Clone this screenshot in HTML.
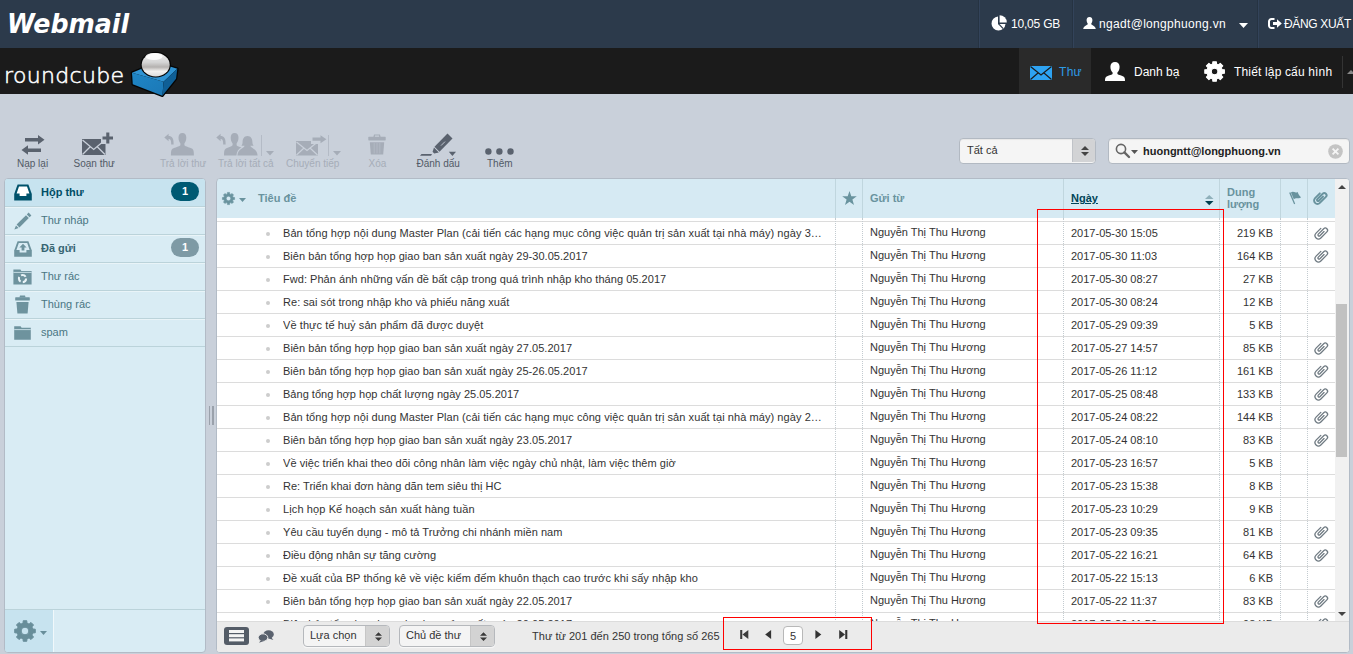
<!DOCTYPE html>
<html lang="vi">
<head>
<meta charset="utf-8">
<title>Webmail</title>
<style>
html,body{margin:0;padding:0}
body{width:1353px;height:654px;overflow:hidden;position:relative;background:#c9d0da;font-family:"Liberation Sans",Arial,sans-serif;font-size:11px;color:#333}
.abs{position:absolute}
svg{position:absolute;overflow:visible}
#top{position:absolute;left:0;top:0;width:1353px;height:48px;background:#2c3a4b}
#nav{position:absolute;left:0;top:48px;width:1353px;height:46px;background:#1b1b1b}
.tsep{position:absolute;top:0;width:1px;height:48px;background:#263342;border-right:1px solid #33435a}
.ttext{position:absolute;top:16px;line-height:16px;font-size:12px;color:#fff;white-space:nowrap}
.navtxt{position:absolute;top:64px;line-height:16px;font-size:12px;color:#fff;white-space:nowrap}
#webmail{position:absolute;left:7.3px;top:6px;font:italic bold 29px/34px "DejaVu Sans","Liberation Sans",sans-serif;color:#fff;white-space:nowrap;transform:scale(0.871,0.885);transform-origin:0 27px}
#rc{position:absolute;left:4px;top:60.8px;-webkit-text-stroke:0.55px #fff;font:22px/30px "DejaVu Sans Light","DejaVu Sans",sans-serif;font-weight:200;color:#fff;white-space:nowrap;letter-spacing:0.32px}
.tb{position:absolute;top:157px;font-size:10px;line-height:13px;color:#525a66;white-space:nowrap}
.tb.dis{color:#a6adb8}
#side{position:absolute;left:4px;top:178px;width:202px;height:475px;background:#d9ecf4;border:1px solid #b2bbc6;border-radius:4px;box-sizing:border-box;overflow:hidden}
.fold{position:relative;height:28px;border-bottom:1px solid #bbd3da;border-top:1px solid #e9f4f8;box-sizing:border-box;color:#4a7683;line-height:24px;padding-left:36px;font-size:11px;white-space:nowrap}
.fold.sel{background:#c7e3ef;font-weight:bold;color:#004e66;border-top-color:#c7e3ef}
.fold.un{font-weight:bold;color:#376572}
.badge{position:absolute;right:6px;top:2px;height:19px;width:28px;border-radius:10px;background:#7e9aa5;color:#fff;font-weight:bold;font-size:11px;line-height:19px;text-align:center}
.fold.sel .badge{background:#005a73}
#sfoot{position:absolute;left:0;bottom:0;width:200px;height:43px;border-top:1px solid #bbd3da;box-sizing:border-box}
#sgear{position:absolute;left:0;top:0;width:48px;height:42px;background:#c7e3ef;border-right:1px solid #f0f8fb}
#list{position:absolute;left:216px;top:178px;width:1134px;height:475px;background:#fff;border:1px solid #b2bbc6;border-radius:4px;box-sizing:border-box;overflow:hidden;background-image:linear-gradient(#d6eaf3,#d6eaf3);background-size:100% 39px;background-repeat:no-repeat}
#li{position:absolute;left:1px;top:0;width:1131px;height:473px}
#lhead{position:absolute;left:0;top:0;width:1117px;height:39px;background:#d6eaf3;box-sizing:border-box}
.hcell{position:absolute;top:0;height:39px;border-left:1px solid #c0d6de;box-sizing:border-box}
.htxt{position:absolute;color:#69939e;font-weight:bold;font-size:11px;line-height:13px;white-space:nowrap}
.row{position:absolute;left:-1px;width:1118px;height:23px;border-bottom:1px solid #dcdcdc;box-sizing:border-box;line-height:22px;white-space:nowrap}
.row span{position:absolute;top:0;height:22px;overflow:hidden;text-overflow:ellipsis;white-space:nowrap}
.row .dot{position:absolute;left:49px;top:10px;width:4px;height:4px;border-radius:2px;background:#cdcdcd}
.row .subj{left:66px;width:543px}
.row .from{left:653px;top:-1px}
.row .date{left:854px}
.row .size{left:1001px;width:55px;text-align:right}
.row .clip{left:1095px;top:2px;width:18px;height:18px}
.vline{position:absolute;top:39px;width:0;height:404px;border-left:1px dotted #c3cbd0}
#sbar{position:absolute;left:1117px;top:0;width:14px;height:442px;background:#f1f1f1}
#sthumb{position:absolute;left:1.3px;top:125px;width:10.5px;height:153px;background:#c1c1c1}
#lfoot{position:absolute;left:-1px;bottom:0;width:1132px;height:31px;background:#ebebeb;border-top:1px solid #dcdcdc;box-sizing:border-box}
.sel2{position:absolute;height:22px;box-sizing:border-box;border:1px solid #b5b8bc;border-radius:4px;background:#f4f4f4;font-size:11px;line-height:18px;padding-left:6px;color:#333;overflow:hidden;box-shadow:0 1px 1px rgba(255,255,255,.7)}
.sel2 b{position:absolute;right:0;top:0;width:23px;height:20px;background:#d3d3d3;border-left:1px solid #c6c6c6}
.red{position:absolute;border:1px solid #ff0000;box-sizing:border-box}
.inp{position:absolute;top:138px;height:26px;box-sizing:border-box;border:1px solid #b2b9c2;border-radius:4px;background:#f5f5f5;box-shadow:inset 0 1px 1px rgba(0,0,0,.06)}
</style>
</head>
<body>
<div id="top"></div>
<div id="nav"></div>
<div id="webmail">Webmail</div>
<div id="rc">roundcube</div>
<!-- roundcube cube logo -->
<svg style="left:120px;top:44px" width="70" height="56" viewBox="0 0 70 56">
<linearGradient id="gb" x1="0" y1="0" x2="0" y2="1"><stop offset="0" stop-color="#f1f1f1"/><stop offset="0.4" stop-color="#d4d4d4"/><stop offset="0.6" stop-color="#b4b1af"/><stop offset="0.78" stop-color="#f4f2f0"/><stop offset="1" stop-color="#dcdcdc"/></linearGradient>
<linearGradient id="gl" x1="0" y1="0" x2="1" y2="1"><stop offset="0" stop-color="#1f86c6"/><stop offset="1" stop-color="#1b78b6"/></linearGradient>
<path d="M12 28.7 L37 18.4 L57.3 24.8 L56 34.7 L42.4 51.8 L12.8 40.2Z" fill="#050505" stroke="#050505" stroke-width="2.6" stroke-linejoin="round"/>
<path d="M12 28.7 L37 18.4 L57.3 24.8 L43.6 37.65Z" fill="#2f93d3"/>
<path d="M12 28.7 L43.6 37.65 L42.4 51.8 L12.8 40.2Z" fill="url(#gl)"/>
<path d="M43.6 37.65 L57.3 24.8 L56 34.7 L42.4 51.8Z" fill="#0f5f96"/>
<ellipse cx="35.7" cy="20.7" rx="15.2" ry="12.9" fill="#050505"/>
<ellipse cx="35.7" cy="20.7" rx="14" ry="11.7" fill="url(#gb)"/>
<ellipse cx="34" cy="12.5" rx="8.5" ry="3.6" fill="#fff" opacity="0.85"/>
</svg>

<div class="tsep" style="left:978px"></div>
<div class="tsep" style="left:1072px"></div>
<div class="tsep" style="left:1257px"></div>
<!-- pie -->
<svg style="left:991px;top:15px" width="16" height="16" viewBox="0 0 16 16"><path d="M7 1.5 A7 7 0 1 0 14.5 9 L7 9Z" fill="#fff"/><path d="M8.6 0.2 A7.2 7.2 0 0 1 15.8 7.4 L8.6 7.4Z" fill="#fff"/><path d="M7.4 8.6 L12.2 13.6" stroke="#2c3a4b" stroke-width="1.3"/></svg>
<div class="ttext" style="left:1011px;letter-spacing:-0.2px">10,05 GB</div>
<!-- user -->
<svg style="left:1083px;top:17px" width="13" height="12" viewBox="0 0 13 12"><path d="M6.5 0 C8.6 0 9.6 1.6 9.4 3.6 C9.2 5.4 8.4 6.4 8.2 7 C8.6 8.2 12.2 8.6 12.8 12 L0.2 12 C0.8 8.6 4.4 8.2 4.8 7 C4.6 6.4 3.8 5.4 3.6 3.6 C3.4 1.6 4.4 0 6.5 0Z" fill="#fff"/></svg>
<div class="ttext" style="left:1099px;letter-spacing:0.32px">ngadt@longphuong.vn</div>
<svg style="left:1239px;top:23px" width="9" height="5" viewBox="0 0 9 5"><path d="M0 0 L9 0 L4.5 5Z" fill="#fff"/></svg>
<!-- logout -->
<svg style="left:1268px;top:18px" width="14" height="11" viewBox="0 0 14 11"><path d="M6.5 1 L3.5 1 A2.5 2.5 0 0 0 1 3.5 L1 7.5 A2.5 2.5 0 0 0 3.5 10 L6.5 10" fill="none" stroke="#fff" stroke-width="2"/><path d="M5 4 L9 4 L9 1.2 L13.8 5.5 L9 9.8 L9 7 L5 7Z" fill="#fff"/></svg>
<div class="ttext" style="left:1284px;letter-spacing:-0.35px">ĐĂNG XUẤT</div>

<div class="abs" style="left:1019px;top:48px;width:72px;height:46px;background:#2a2a2a"></div>
<!-- mail icon -->
<svg style="left:1030px;top:66px" width="22" height="14" viewBox="0 0 22 14"><rect width="22" height="14" fill="#2ea3f2"/><path d="M0.5 0.5 L11 9 L21.5 0.5 M0.5 13.5 L8 7 M21.5 13.5 L14 7" fill="none" stroke="#1b1b1b" stroke-width="1.2"/></svg>
<div class="navtxt" style="left:1059px;color:#2e9be6;letter-spacing:0.3px">Thư</div>
<!-- contact icon -->
<svg style="left:1105px;top:61.7px" width="20" height="19" viewBox="0 0 20 19"><path d="M10 0 C12.8 0 14.6 1.8 14.6 4.8 C14.6 7.6 13.6 9.6 12.4 10.6 L12.4 12 C13.4 13 17.4 13.6 18.8 14.8 C19.8 15.8 20 17 20 19 L0 19 C0 17 0.2 15.8 1.2 14.8 C2.6 13.6 6.6 13 7.6 12 L7.6 10.6 C6.4 9.6 5.4 7.6 5.4 4.8 C5.4 1.8 7.2 0 10 0Z" fill="#fff"/></svg>
<div class="navtxt" style="left:1134px">Danh bạ</div>
<svg style="left:1204.2px;top:61px" width="21.2" height="21" viewBox="0 0 20 20"><path d="M17.06 8.13 L19.35 8.29 L19.35 11.71 L17.06 11.87 L16.31 13.67 L17.82 15.40 L15.40 17.82 L13.67 16.31 L11.87 17.06 L11.71 19.35 L8.29 19.35 L8.13 17.06 L6.33 16.31 L4.60 17.82 L2.18 15.40 L3.69 13.67 L2.94 11.87 L0.65 11.71 L0.65 8.29 L2.94 8.13 L3.69 6.33 L2.18 4.60 L4.60 2.18 L6.33 3.69 L8.13 2.94 L8.29 0.65 L11.71 0.65 L11.87 2.94 L13.67 3.69 L15.40 2.18 L17.82 4.60 L16.31 6.33Z M13.10 10.00 A3.1 3.1 0 1 0 6.90 10.00 A3.1 3.1 0 1 0 13.10 10.00Z" fill="#fff" stroke="#fff" stroke-width="1" stroke-linejoin="round" fill-rule="evenodd"/></svg>
<div class="navtxt" style="left:1234px;letter-spacing:0.16px">Thiết lập cấu hình</div>
<div class="abs" style="left:1341.5px;top:56px;width:1px;height:32px;background:#343434"></div>
<svg style="left:1346.5px;top:70px" width="8" height="4" viewBox="0 0 8 4"><path d="M0 4 L4 0 L8 4Z" fill="#888"/></svg>

<!-- toolbar -->
<svg style="left:21px;top:134px" width="24" height="21" viewBox="0 0 24 21" fill="#5a626e"><path d="M4 4 L17 4 L17 1 L23.5 5.7 L17 10.4 L17 7.5 L4 7.5Z"/><path d="M20 14.5 L7 14.5 L7 11.2 L0.5 16 L7 20.8 L7 18 L20 18Z"/></svg>
<div class="tb" style="left:17px">Nạp lại</div>
<svg style="left:82px;top:132px" width="32" height="24" viewBox="0 0 32 24"><rect x="0" y="7" width="23.5" height="16" fill="#5a626e"/><path d="M0.5 8 L11.7 17.5 L23 8 M0.5 22.5 L8.5 14.5 M23 22.5 L15 14.5" fill="none" stroke="#c9d0da" stroke-width="1.3"/><rect x="19" y="0" width="12.5" height="12" fill="#c9d0da"/><path d="M25.8 0.5 V11.5 M20.5 6 H31" stroke="#5a626e" stroke-width="3.1" fill="none"/></svg>
<div class="tb" style="left:73.5px">Soạn thư</div>
<!-- reply -->
<svg style="left:164px;top:133px" width="30" height="23" viewBox="0 0 30 23" fill="#a6adb8"><path d="M18.4 0 C21 0 22.3 1.8 22.3 4.6 C22.3 7.4 21.4 9.4 20.4 10.4 L20.4 12.2 C21.5 13.6 26 14.4 28 15.6 C29.6 16.6 29.9 18.6 29.9 22.5 L6.9 22.5 C6.9 18.6 7.2 16.6 8.8 15.6 C10.8 14.4 15.3 13.6 16.4 12.2 L16.4 10.4 C15.4 9.4 14.5 7.4 14.5 4.6 C14.5 1.8 15.8 0 18.4 0Z"/><path d="M0.3 4.5 L4.6 0.8 L4.6 3 C8 3 9.9 5.4 9.6 11.4 L7.2 11.4 C7.2 7.6 6.6 6 4.6 6 L4.6 8.2Z"/></svg>
<div class="tb dis" style="left:160px">Trả lời thư</div>
<!-- reply all -->
<svg style="left:216px;top:133px" width="42" height="23" viewBox="0 0 42 23" fill="#a6adb8"><path d="M0.3 4.5 L4.6 0.8 L4.6 3 C8 3 9.9 5.4 9.6 11.4 L7.2 11.4 C7.2 7.6 6.6 6 4.6 6 L4.6 8.2Z"/><path d="M18.6 0 C21.2 0 22.5 1.8 22.5 4.6 C22.5 7.4 21.6 9.4 20.6 10.4 L20.6 12.2 C21.4 13.4 23.4 13.8 25.4 14.6 C22.4 16 20.8 18.4 20.4 22.5 L8 22.5 C8 18.6 8.3 16.6 9.9 15.6 C11.9 14.4 15.5 13.6 16.6 12.2 L16.6 10.4 C15.6 9.4 14.7 7.4 14.7 4.6 C14.7 1.8 16 0 18.6 0Z"/><path d="M31.5 3 C35 3 36.4 6 36.4 9 C36.4 10.6 37 12 37.6 12.8 L34.4 12.8 C35 15.6 40.8 15.4 41.6 22.5 L21.4 22.5 C22.2 15.4 28 15.6 28.6 12.8 L25.4 12.8 C26 12 26.6 10.6 26.6 9 C26.6 6 28 3 31.5 3Z"/></svg>
<div class="abs" style="left:261px;top:135px;width:1px;height:21px;background:#b4bbc6"></div>
<svg style="left:265.5px;top:151px" width="8" height="4.5" viewBox="0 0 8 4.5"><path d="M0 0 L8 0 L4 4.5Z" fill="#a6adb8"/></svg>
<div class="tb dis" style="left:218px">Trả lời tất cả</div>
<!-- forward -->
<svg style="left:296px;top:135px" width="31" height="21" viewBox="0 0 31 21"><rect x="0" y="6" width="22" height="14.5" fill="#a6adb8"/><path d="M0.5 7 L11 15.5 L21.5 7 M0.5 20 L8 13 M21.5 20 L14 13" fill="none" stroke="#c9d0da" stroke-width="1.2"/><rect x="15" y="0" width="16" height="9" fill="#c9d0da"/><path d="M16.5 2.6 L24.5 2.6 L24.5 0.2 L30.4 4.2 L24.5 8.2 L24.5 5.8 L16.5 5.8Z" fill="#a6adb8"/></svg>
<div class="abs" style="left:328px;top:135px;width:1px;height:21px;background:#b4bbc6"></div>
<svg style="left:332.5px;top:151px" width="8" height="4.5" viewBox="0 0 8 4.5"><path d="M0 0 L8 0 L4 4.5Z" fill="#a6adb8"/></svg>
<div class="tb dis" style="left:286px">Chuyển tiếp</div>
<!-- delete -->
<svg style="left:368px;top:134px" width="18" height="21" viewBox="0 0 18 21" fill="#a6adb8"><path d="M6 0.5 L12 0.5 L12.6 3 L5.4 3Z M7 1.4 L6.8 3 L11.2 3 L11 1.4Z" fill-rule="evenodd"/><rect x="0.3" y="2.8" width="17.4" height="3.6" rx="0.6"/><path d="M1.8 8.2 L16.2 8.2 L15.2 20.5 L2.8 20.5Z"/><path d="M6.2 9 V19.5 M9 9 V19.5 M11.8 9 V19.5" stroke="#b3bac5" stroke-width="0.9"/></svg>
<div class="tb dis" style="left:368.5px">Xóa</div>
<!-- mark -->
<svg style="left:420px;top:133px" width="37" height="24" viewBox="0 0 37 24" fill="#5a626e"><path d="M1.5 21 L12 21 L11 22.8 L0 22.8Z"/><path d="M27.5 0.5 L32.5 5.5 L19.5 18.8 L14.5 13.8Z"/><path d="M14 14.6 L18.8 19.4 L14.2 20.4 L12.6 18.8Z"/><path d="M21 12.6 L25 8.6" stroke="#c9d0da" stroke-width="0.9"/><path d="M28.8 18.8 L36 18.8 L32.4 23Z"/></svg>
<div class="tb" style="left:416.5px">Đánh dấu</div>
<!-- more -->
<svg style="left:485px;top:147.5px" width="29" height="7" viewBox="0 0 29 7" fill="#5a626e"><circle cx="3.4" cy="3.5" r="3.2"/><circle cx="14.4" cy="3.5" r="3.2"/><circle cx="25.5" cy="3.5" r="3.2"/></svg>
<div class="tb" style="left:487px">Thêm</div>

<!-- filter + search -->
<div class="inp" style="left:959px;width:137px"><div class="abs" style="left:7px;top:0;line-height:23px;font-size:11px;color:#333">Tất cả</div><div class="abs" style="right:0;top:0;width:22px;height:23px;background:#d2d3d5;border-left:1px solid #c0c3c8;border-radius:0 3px 3px 0"></div>
<svg style="left:121px;top:7px" width="8" height="10" viewBox="0 0 8 10" fill="#444"><path d="M0 4 L4 0 L8 4Z M0 6 L8 6 L4 10Z"/></svg></div>
<div class="inp" style="left:1108px;width:242px">
<svg style="left:6px;top:4px" width="16" height="16" viewBox="0 0 16 16"><circle cx="6" cy="6" r="4.6" fill="none" stroke="#666" stroke-width="1.6"/><path d="M9.4 9.4 L14 14" stroke="#666" stroke-width="2.4" stroke-linecap="round"/></svg>
<svg style="left:22px;top:11px" width="7" height="4" viewBox="0 0 7 4"><path d="M0 0 L7 0 L3.5 4Z" fill="#555"/></svg>
<div class="abs" style="left:34px;top:0;line-height:24px;font-size:11px;font-weight:bold;color:#222;white-space:nowrap">huongntt@longphuong.vn</div>
<svg style="left:219px;top:5px" width="15" height="15" viewBox="0 0 15 15"><circle cx="7.5" cy="7.5" r="7.3" fill="#c4c4c4"/><path d="M4.6 4.6 L10.4 10.4 M10.4 4.6 L4.6 10.4" stroke="#f5f5f5" stroke-width="1.8"/></svg>
</div>

<!-- sidebar -->
<div id="side">
<div class="fold sel">Hộp thư<span class="badge">1</span>
<svg style="left:9px;top:4px" width="18" height="17" viewBox="0 0 18 17"><path d="M3.6 0.5 L14.4 0.5 L17.8 10 L17.8 16.5 L0.2 16.5 L0.2 10Z" fill="#00526b"/><path d="M5 2.4 L13 2.4 L15.4 9.6 L12.4 9.6 L12.4 12 L5.6 12 L5.6 9.6 L2.6 9.6Z" fill="#fff"/></svg></div>
<div class="fold">Thư nháp
<svg style="left:9px;top:4px" width="18" height="18" viewBox="0 0 18 18" fill="#6e939e"><path d="M14.6 0.6 L17.4 3.4 L15.6 5.2 L12.8 2.4Z"/><path d="M12 3.2 L14.8 6 L5.4 15.4 L2.6 12.6Z"/><path d="M2 13.4 L4.6 16 L0.4 17.6Z"/></svg></div>
<div class="fold un">Đã gửi<span class="badge">1</span>
<svg style="left:9px;top:5px" width="18" height="16" viewBox="0 0 18 16"><path d="M3.6 0.3 L14.4 0.3 L17.8 9.4 L17.8 15.8 L0.2 15.8 L0.2 9.4Z" fill="#6e939e"/><path d="M4.8 2 L13.2 2 L15.6 9 L12.4 9 L12.4 11.4 L5.6 11.4 L5.6 9 L2.4 9Z" fill="#d9ecf4"/><path d="M9 2.8 L12.6 6.4 L10.4 6.4 L10.4 9.4 L7.6 9.4 L7.6 6.4 L5.4 6.4Z" fill="#6e939e"/></svg></div>
<div class="fold">Thư rác
<svg style="left:8px;top:5px" width="19" height="16" viewBox="0 0 19 16"><path d="M0.4 0.4 L7.4 0.4 L8.4 2 L18.6 2 L18.6 15.6 L0.4 15.6Z" fill="#6e939e"/><path d="M0.4 3.4 H18.6" stroke="#d9ecf4" stroke-width="0.8"/><circle cx="9.5" cy="9.6" r="3.6" fill="none" stroke="#eaf4f8" stroke-width="2" stroke-dasharray="5.2 2.3"/></svg></div>
<div class="fold">Thùng rác
<svg style="left:10px;top:3px" width="15" height="19" viewBox="0 0 15 19" fill="#6e939e"><path d="M5 0.4 L10 0.4 L10.6 2.6 L4.4 2.6Z"/><rect x="0.2" y="2.2" width="14.6" height="3.4" rx="0.6"/><path d="M1.4 7 L13.6 7 L12.6 18.6 L2.4 18.6Z"/></svg></div>
<div class="fold">spam
<svg style="left:9px;top:6px" width="17" height="14" viewBox="0 0 17 14"><path d="M0.2 0.2 L6.6 0.2 L7.6 1.8 L16.8 1.8 L16.8 13.8 L0.2 13.8Z" fill="#6e939e"/><path d="M0.2 3.6 H16.8" stroke="#d9ecf4" stroke-width="0.8"/></svg></div>
<div id="sfoot"><div id="sgear"></div>
<svg style="left:8.9px;top:10.4px" width="22" height="22" viewBox="0 0 20 20"><path d="M17.07 8.18 L19.36 8.37 L19.36 11.63 L17.07 11.82 L16.28 13.72 L17.77 15.46 L15.46 17.77 L13.72 16.28 L11.82 17.07 L11.63 19.36 L8.37 19.36 L8.18 17.07 L6.28 16.28 L4.54 17.77 L2.23 15.46 L3.72 13.72 L2.93 11.82 L0.64 11.63 L0.64 8.37 L2.93 8.18 L3.72 6.28 L2.23 4.54 L4.54 2.23 L6.28 3.72 L8.18 2.93 L8.37 0.64 L11.63 0.64 L11.82 2.93 L13.72 3.72 L15.46 2.23 L17.77 4.54 L16.28 6.28Z M13.50 10.00 A3.5 3.5 0 1 0 6.50 10.00 A3.5 3.5 0 1 0 13.50 10.00Z" fill="#688e9a" stroke="#688e9a" stroke-width="0.9" stroke-linejoin="round" fill-rule="evenodd"/></svg>
<svg style="left:35px;top:21px" width="7" height="4" viewBox="0 0 7 4"><path d="M0 0 L7 0 L3.5 4Z" fill="#688e9a"/></svg>
</div>
</div>

<!-- splitter -->
<div class="abs" style="left:208.5px;top:406px;width:1.5px;height:19px;background:#9aa1ab"></div>
<div class="abs" style="left:212px;top:406px;width:1.5px;height:19px;background:#9aa1ab"></div>

<!-- message list -->
<div id="list"><div id="li">
<div class="row" style="top:20px"></div>
<div class="row" style="top:43px"><i class="dot"></i><span class="subj" style="letter-spacing:0.073px">Bản tổng hợp nội dung Master Plan (cải tiến các hạng mục công việc quản trị sản xuất tại nhà máy) ngày 3…</span><span class="from">Nguyễn Thị Thu Hương</span><span class="date">2017-05-30 15:05</span><span class="size">219 KB</span><svg class="clip" viewBox="0 0 16 16"><g transform="rotate(45 8 8)" fill="none" stroke="#6f7a82" stroke-width="1.15" stroke-linecap="round"><path d="M5 5.2 V11.2 A3 3 0 0 0 11 11.2 V3.6 A2 2 0 0 0 7 3.6 V10.4 A1 1 0 0 0 9 10.4 V5.2"/></g></svg></div>
<div class="row" style="top:66px"><i class="dot"></i><span class="subj" style="letter-spacing:0.036px">Biên bản tổng hợp họp giao ban sản xuất ngày 29-30.05.2017</span><span class="from">Nguyễn Thị Thu Hương</span><span class="date">2017-05-30 11:03</span><span class="size">164 KB</span><svg class="clip" viewBox="0 0 16 16"><g transform="rotate(45 8 8)" fill="none" stroke="#6f7a82" stroke-width="1.15" stroke-linecap="round"><path d="M5 5.2 V11.2 A3 3 0 0 0 11 11.2 V3.6 A2 2 0 0 0 7 3.6 V10.4 A1 1 0 0 0 9 10.4 V5.2"/></g></svg></div>
<div class="row" style="top:89px"><i class="dot"></i><span class="subj" style="letter-spacing:0.038px">Fwd: Phản ánh những vấn đề bất cập trong quá trình nhập kho tháng 05.2017</span><span class="from">Nguyễn Thị Thu Hương</span><span class="date">2017-05-30 08:27</span><span class="size">27 KB</span></div>
<div class="row" style="top:112px"><i class="dot"></i><span class="subj" style="letter-spacing:0.040px">Re: sai sót trong nhập kho và phiếu năng xuất</span><span class="from">Nguyễn Thị Thu Hương</span><span class="date">2017-05-30 08:24</span><span class="size">12 KB</span></div>
<div class="row" style="top:135px"><i class="dot"></i><span class="subj" style="letter-spacing:0.081px">Về thực tế huỷ sản phẩm đã được duyệt</span><span class="from">Nguyễn Thị Thu Hương</span><span class="date">2017-05-29 09:39</span><span class="size">5 KB</span></div>
<div class="row" style="top:158px"><i class="dot"></i><span class="subj" style="letter-spacing:0.042px">Biên bản tổng hợp họp giao ban sản xuất ngày 27.05.2017</span><span class="from">Nguyễn Thị Thu Hương</span><span class="date">2017-05-27 14:57</span><span class="size">85 KB</span><svg class="clip" viewBox="0 0 16 16"><g transform="rotate(45 8 8)" fill="none" stroke="#6f7a82" stroke-width="1.15" stroke-linecap="round"><path d="M5 5.2 V11.2 A3 3 0 0 0 11 11.2 V3.6 A2 2 0 0 0 7 3.6 V10.4 A1 1 0 0 0 9 10.4 V5.2"/></g></svg></div>
<div class="row" style="top:181px"><i class="dot"></i><span class="subj" style="letter-spacing:0.036px">Biên bản tổng hợp họp giao ban sản xuất ngày 25-26.05.2017</span><span class="from">Nguyễn Thị Thu Hương</span><span class="date">2017-05-26 11:12</span><span class="size">161 KB</span><svg class="clip" viewBox="0 0 16 16"><g transform="rotate(45 8 8)" fill="none" stroke="#6f7a82" stroke-width="1.15" stroke-linecap="round"><path d="M5 5.2 V11.2 A3 3 0 0 0 11 11.2 V3.6 A2 2 0 0 0 7 3.6 V10.4 A1 1 0 0 0 9 10.4 V5.2"/></g></svg></div>
<div class="row" style="top:204px"><i class="dot"></i><span class="subj" style="letter-spacing:0.023px">Bảng tổng hợp họp chất lượng ngày 25.05.2017</span><span class="from">Nguyễn Thị Thu Hương</span><span class="date">2017-05-25 08:48</span><span class="size">133 KB</span><svg class="clip" viewBox="0 0 16 16"><g transform="rotate(45 8 8)" fill="none" stroke="#6f7a82" stroke-width="1.15" stroke-linecap="round"><path d="M5 5.2 V11.2 A3 3 0 0 0 11 11.2 V3.6 A2 2 0 0 0 7 3.6 V10.4 A1 1 0 0 0 9 10.4 V5.2"/></g></svg></div>
<div class="row" style="top:227px"><i class="dot"></i><span class="subj" style="letter-spacing:0.073px">Bản tổng hợp nội dung Master Plan (cải tiến các hạng mục công việc quản trị sản xuất tại nhà máy) ngày 2…</span><span class="from">Nguyễn Thị Thu Hương</span><span class="date">2017-05-24 08:22</span><span class="size">144 KB</span><svg class="clip" viewBox="0 0 16 16"><g transform="rotate(45 8 8)" fill="none" stroke="#6f7a82" stroke-width="1.15" stroke-linecap="round"><path d="M5 5.2 V11.2 A3 3 0 0 0 11 11.2 V3.6 A2 2 0 0 0 7 3.6 V10.4 A1 1 0 0 0 9 10.4 V5.2"/></g></svg></div>
<div class="row" style="top:250px"><i class="dot"></i><span class="subj" style="letter-spacing:0.042px">Biên bản tổng hợp họp giao ban sản xuất ngày 23.05.2017</span><span class="from">Nguyễn Thị Thu Hương</span><span class="date">2017-05-24 08:10</span><span class="size">83 KB</span><svg class="clip" viewBox="0 0 16 16"><g transform="rotate(45 8 8)" fill="none" stroke="#6f7a82" stroke-width="1.15" stroke-linecap="round"><path d="M5 5.2 V11.2 A3 3 0 0 0 11 11.2 V3.6 A2 2 0 0 0 7 3.6 V10.4 A1 1 0 0 0 9 10.4 V5.2"/></g></svg></div>
<div class="row" style="top:273px"><i class="dot"></i><span class="subj" style="letter-spacing:0.051px">Về việc triển khai theo dõi công nhân làm việc ngày chủ nhật, làm việc thêm giờ</span><span class="from">Nguyễn Thị Thu Hương</span><span class="date">2017-05-23 16:57</span><span class="size">5 KB</span></div>
<div class="row" style="top:296px"><i class="dot"></i><span class="subj" style="letter-spacing:0.019px">Re: Triển khai đơn hàng dãn tem siêu thị HC</span><span class="from">Nguyễn Thị Thu Hương</span><span class="date">2017-05-23 15:38</span><span class="size">8 KB</span></div>
<div class="row" style="top:319px"><i class="dot"></i><span class="subj" style="letter-spacing:0.111px">Lịch họp Kế hoạch sản xuất hàng tuần</span><span class="from">Nguyễn Thị Thu Hương</span><span class="date">2017-05-23 10:29</span><span class="size">9 KB</span></div>
<div class="row" style="top:342px"><i class="dot"></i><span class="subj" style="letter-spacing:0.050px">Yêu cầu tuyển dụng - mô tả Trưởng chi nhánh miền nam</span><span class="from">Nguyễn Thị Thu Hương</span><span class="date">2017-05-23 09:35</span><span class="size">81 KB</span><svg class="clip" viewBox="0 0 16 16"><g transform="rotate(45 8 8)" fill="none" stroke="#6f7a82" stroke-width="1.15" stroke-linecap="round"><path d="M5 5.2 V11.2 A3 3 0 0 0 11 11.2 V3.6 A2 2 0 0 0 7 3.6 V10.4 A1 1 0 0 0 9 10.4 V5.2"/></g></svg></div>
<div class="row" style="top:365px"><i class="dot"></i><span class="subj" style="letter-spacing:-0.014px">Điều động nhân sự tăng cường</span><span class="from">Nguyễn Thị Thu Hương</span><span class="date">2017-05-22 16:21</span><span class="size">64 KB</span><svg class="clip" viewBox="0 0 16 16"><g transform="rotate(45 8 8)" fill="none" stroke="#6f7a82" stroke-width="1.15" stroke-linecap="round"><path d="M5 5.2 V11.2 A3 3 0 0 0 11 11.2 V3.6 A2 2 0 0 0 7 3.6 V10.4 A1 1 0 0 0 9 10.4 V5.2"/></g></svg></div>
<div class="row" style="top:388px"><i class="dot"></i><span class="subj" style="letter-spacing:0.078px">Đề xuất của BP thống kê về việc kiểm đếm khuôn thạch cao trước khi sấy nhập kho</span><span class="from">Nguyễn Thị Thu Hương</span><span class="date">2017-05-22 15:13</span><span class="size">6 KB</span></div>
<div class="row" style="top:411px"><i class="dot"></i><span class="subj" style="letter-spacing:0.042px">Biên bản tổng hợp họp giao ban sản xuất ngày 22.05.2017</span><span class="from">Nguyễn Thị Thu Hương</span><span class="date">2017-05-22 11:37</span><span class="size">83 KB</span><svg class="clip" viewBox="0 0 16 16"><g transform="rotate(45 8 8)" fill="none" stroke="#6f7a82" stroke-width="1.15" stroke-linecap="round"><path d="M5 5.2 V11.2 A3 3 0 0 0 11 11.2 V3.6 A2 2 0 0 0 7 3.6 V10.4 A1 1 0 0 0 9 10.4 V5.2"/></g></svg></div>
<div class="row" style="top:434px"><i class="dot"></i><span class="subj" style="letter-spacing:0.042px">Biên bản tổng hợp họp giao ban sản xuất ngày 20.05.2017</span><span class="from">Nguyễn Thị Thu Hương</span><span class="date">2017-05-20 11:50</span><span class="size">98 KB</span><svg class="clip" viewBox="0 0 16 16"><g transform="rotate(45 8 8)" fill="none" stroke="#6f7a82" stroke-width="1.15" stroke-linecap="round"><path d="M5 5.2 V11.2 A3 3 0 0 0 11 11.2 V3.6 A2 2 0 0 0 7 3.6 V10.4 A1 1 0 0 0 9 10.4 V5.2"/></g></svg></div>
<div class="vline" style="left:617px"></div>
<div class="vline" style="left:644px"></div>
<div class="vline" style="left:845px"></div>
<div class="vline" style="left:1001px"></div>
<div class="vline" style="left:1062px"></div>
<div class="vline" style="left:1089px"></div>
<div id="lhead">
<div class="hcell" style="left:617px"></div><div class="hcell" style="left:644px"></div><div class="hcell" style="left:845px"></div><div class="hcell" style="left:1001px"></div><div class="hcell" style="left:1062px"></div><div class="hcell" style="left:1089px"></div>
<svg style="left:4.3px;top:13px" width="13" height="13" viewBox="0 0 20 20"><path d="M17.07 8.18 L19.36 8.37 L19.36 11.63 L17.07 11.82 L16.28 13.72 L17.77 15.46 L15.46 17.77 L13.72 16.28 L11.82 17.07 L11.63 19.36 L8.37 19.36 L8.18 17.07 L6.28 16.28 L4.54 17.77 L2.23 15.46 L3.72 13.72 L2.93 11.82 L0.64 11.63 L0.64 8.37 L2.93 8.18 L3.72 6.28 L2.23 4.54 L4.54 2.23 L6.28 3.72 L8.18 2.93 L8.37 0.64 L11.63 0.64 L11.82 2.93 L13.72 3.72 L15.46 2.23 L17.77 4.54 L16.28 6.28Z M13.50 10.00 A3.5 3.5 0 1 0 6.50 10.00 A3.5 3.5 0 1 0 13.50 10.00Z" fill="#69939e" stroke="#69939e" stroke-width="0.9" stroke-linejoin="round" fill-rule="evenodd"/></svg>
<svg style="left:21px;top:19px" width="7" height="4" viewBox="0 0 7 4"><path d="M0 0 L7 0 L3.5 4Z" fill="#69939e"/></svg>
<div class="htxt" style="left:40px;top:13px">Tiêu đề</div>
<svg style="left:624px;top:12px" width="15" height="14" viewBox="0 0 15 14"><path d="M7.5 0 L9.3 5.2 L14.8 5.3 L10.4 8.6 L12 13.9 L7.5 10.7 L3 13.9 L4.6 8.6 L0.2 5.3 L5.7 5.2Z" fill="#69939e"/></svg>
<div class="htxt" style="left:652px;top:13px">Gửi từ</div>
<div class="htxt" style="left:853px;top:13px;color:#004458;text-decoration:underline">Ngày</div>
<svg style="left:987.3px;top:16px" width="8.5" height="10.2" viewBox="0 0 8 10" preserveAspectRatio="none"><path d="M0 4 L4 0 L8 4Z" fill="#8fb0ba"/><path d="M0 6 L8 6 L4 10Z" fill="#00404f"/></svg>
<div class="htxt" style="left:1009px;top:7px;line-height:12px;white-space:normal;width:50px">Dung lượng</div>
<svg style="left:1069.6px;top:11.8px" width="13.5" height="13.5" viewBox="0 0 12 12"><path d="M1 1.6 L2.2 1 L6.4 11.4 L5.4 11.8Z" fill="#69939e"/><path d="M2.6 1.4 C4.6 -0.4 6 2.2 8.6 0.8 C9 2.6 10.4 4.6 11.6 5.6 C9.4 7.6 7.4 5.2 5.2 7.4Z" fill="#69939e"/></svg>
<svg style="left:1093.2px;top:10.2px" width="18" height="18" viewBox="0 0 16 16"><g transform="rotate(45 8 8)" fill="none" stroke="#69939e" stroke-width="1.7" stroke-linecap="round"><path d="M5 5.2 V11.2 A3 3 0 0 0 11 11.2 V3.6 A2 2 0 0 0 7 3.6 V10.4 A1 1 0 0 0 9 10.4 V5.2"/></g></svg>
</div>
<div id="sbar"><div id="sthumb"></div>
<svg style="left:3px;top:6px" width="8" height="4" viewBox="0 0 8 4"><path d="M0 4 L4 0 L8 4Z" fill="#444"/></svg>
<svg style="left:3px;top:433px" width="8" height="4" viewBox="0 0 8 4"><path d="M0 0 L8 0 L4 4Z" fill="#444"/></svg>
</div>
<div id="lfoot"><div class="abs" style="left:1px;top:0">
<div class="abs" style="left:6px;top:5px;width:24.5px;height:18px;border-radius:3px;background:#545c67"></div>
<div class="abs" style="left:11px;top:7.7px;width:15px;height:3px;background:#f4f4f4;box-shadow:0 4.2px 0 #f4f4f4,0 8.4px 0 #f4f4f4"></div>
<svg style="left:40px;top:8px" width="16" height="13" viewBox="0 0 16 13" fill="#5a626e"><ellipse cx="10.6" cy="4.4" rx="5.2" ry="4.2"/><path d="M13 7 L15.4 10 L10.6 8.4Z"/><ellipse cx="5" cy="7.6" rx="4.8" ry="3.8" stroke="#ebebeb" stroke-width="1"/><path d="M3 10 L1 12.8 L6 11Z"/></svg>
<div class="sel2" style="left:85px;top:3px;width:87px">Lựa chọn<b></b><svg style="left:70.5px;top:5.5px" width="7" height="9" viewBox="0 0 8 10" fill="#3a3a3a"><path d="M0 4 L4 0 L8 4Z M0 6 L8 6 L4 10Z"/></svg></div>
<div class="sel2" style="left:181px;top:3px;width:96px">Chủ đề thư<b></b><svg style="left:79.5px;top:5.5px" width="7" height="9" viewBox="0 0 8 10" fill="#3a3a3a"><path d="M0 4 L4 0 L8 4Z M0 6 L8 6 L4 10Z"/></svg></div>
<div class="abs" style="left:314px;top:4px;line-height:20px;font-size:11px;color:#333;white-space:nowrap;letter-spacing:0.03px">Thư từ 201 đến 250 trong tổng số 265</div>
<svg style="left:522px;top:8px" width="8.5" height="9" viewBox="0 0 9 10" preserveAspectRatio="none" fill="#3c3c3c"><rect x="0.2" y="0" width="2.2" height="10"/><path d="M8.8 0 L8.8 10 L2.6 5Z"/></svg>
<svg style="left:546.5px;top:8px" width="6.5" height="9" viewBox="0 0 7 10" preserveAspectRatio="none" fill="#333"><path d="M6.6 0 L6.6 10 L0.2 5Z"/></svg>
<div class="abs" style="left:565px;top:4px;width:20px;height:19px;box-sizing:border-box;border:1px solid #b8b8b8;border-radius:4px;background:#fff;text-align:center;line-height:18px;font-size:11px;color:#333">5</div>
<svg style="left:596.5px;top:8px" width="6.5" height="9" viewBox="0 0 7 10" preserveAspectRatio="none" fill="#333"><path d="M0.4 0 L0.4 10 L6.8 5Z"/></svg>
<svg style="left:621px;top:8px" width="8.5" height="9" viewBox="0 0 9 10" preserveAspectRatio="none" fill="#333"><rect x="6.6" y="0" width="2.2" height="10"/><path d="M0.2 0 L0.2 10 L6.4 5Z"/></svg>
</div></div>
</div></div>

<div class="red" style="left:1037px;top:209px;width:187px;height:415px"></div>
<div class="red" style="left:723px;top:617px;width:149px;height:33px"></div>
</body>
</html>
